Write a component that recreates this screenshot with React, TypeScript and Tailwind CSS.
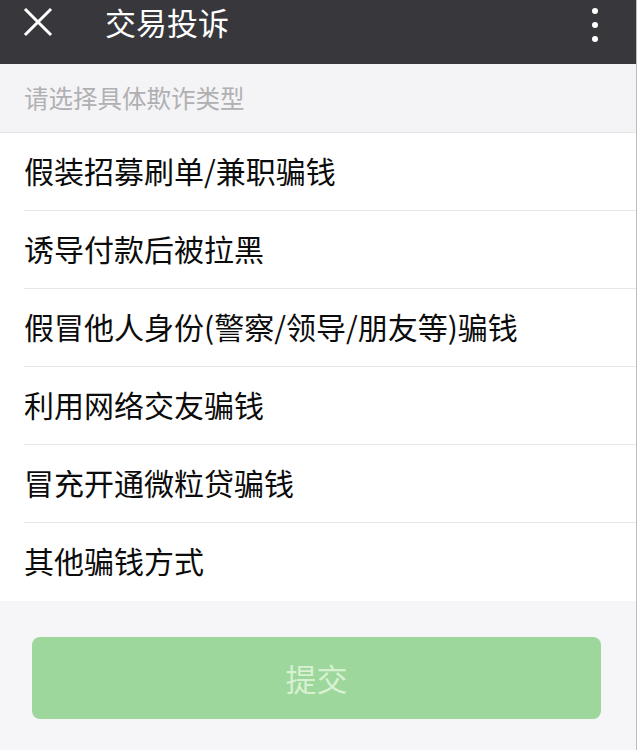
const items = [
  "假装招募刷单/兼职骗钱",
  "诱导付款后被拉黑",
  "假冒他人身份(警察/领导/朋友等)骗钱",
  "利用网络交友骗钱",
  "冒充开通微粒贷骗钱",
  "其他骗钱方式",
];

const font = "font-['Noto_Sans_CJK_SC','Noto_Sans',sans-serif]";

function CloseIcon() {
  return (
    <svg width="30" height="30" viewBox="0 0 30 30" className="shrink-0 mt-[4px]">
      <path d="M3 3 L27 27 M27 3 L3 27" stroke="white" strokeWidth="3" strokeLinecap="square" />
    </svg>
  );
}

export default function App() {
  return (
    <div className={`w-[640px] h-[750px] bg-white ${font}`}>
      <div className="w-[637px] h-full flex flex-col border-r border-[#bdbdc0] bg-[#f6f6f8]">
        {/* top bar */}
        <div className="h-16 shrink-0 bg-[#38373c] flex items-start pt-[3px] pl-[23px] pr-[38px]">
          <CloseIcon />
          <h1 className="ml-[52px] text-[31px] leading-[38px] text-white">交易投诉</h1>
          <div className="ml-auto flex flex-col items-center gap-[8px] pt-[5px]">
            <span className="w-[6px] h-[6px] rounded-full bg-white" />
            <span className="w-[6px] h-[6px] rounded-full bg-white" />
            <span className="w-[6px] h-[6px] rounded-full bg-white" />
          </div>
        </div>

        {/* section label */}
        <div className="h-[69px] shrink-0 bg-[#f4f4f6] flex items-center pl-6 border-b border-[#e6e6e8]">
          <p className="text-[24.5px] text-[#b0b0b3]">请选择具体欺诈类型</p>
        </div>

        {/* options */}
        <div className="bg-white">
          {items.map((t, i) => (
            <div key={t} className="pl-6">
              <div
                className={`h-[78px] flex items-center ${
                  i < items.length - 1 ? "border-b border-[#e7e7e9]" : ""
                }`}
              >
                <span className="text-[30px] text-[#0c0c0c] pb-[3px]">{t}</span>
              </div>
            </div>
          ))}
        </div>

        {/* submit */}
        <div className="pt-[36px] pl-8 pr-[35px]">
          <button className="w-full h-[82px] rounded-[8px] bg-[#9dd79b] text-[31px] text-[#d7f1d3]">
            提交
          </button>
        </div>
      </div>
    </div>
  );
}
